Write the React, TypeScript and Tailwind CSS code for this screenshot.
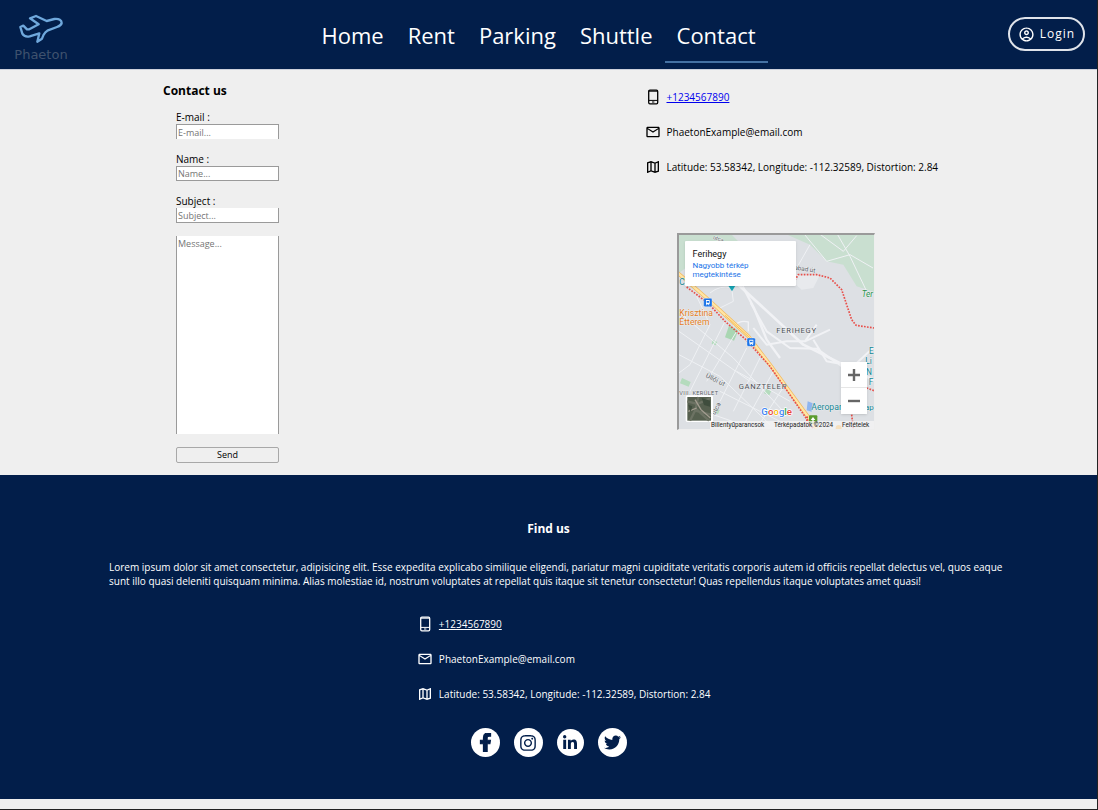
import React from "react";
import { MdOutlineAccountCircle, MdOutlineMail, MdOutlineMap } from "react-icons/md";
import { FaFacebookF, FaInstagram, FaLinkedinIn, FaTwitter } from "react-icons/fa";

const links = ["Home", "Rent", "Parking", "Shuttle", "Contact"];

function Logo() {
  return (
    <a href="#home" className="flex w-14 flex-col items-center gap-[3px]">
      <svg viewBox="57 40 138 90" className="h-[30px] w-[46px]" fill="none" stroke="#6fa8dc" strokeWidth="7" strokeLinejoin="round" strokeLinecap="round" aria-hidden="true">
        <path d="M93 53 L111 46 L143 61 L166 55 Q188 53 188 67 Q187 74 174 79 L145 90 Q138 94 134 102 L129 114 L115 123 L121 98 L92 107 Q76 110 70 99 L64 79 L73 75 L84 86 L91 86 L119 71 Z" />
      </svg>
      <span className="font-['DejaVu_Sans'] text-[13px] leading-4 text-[#3f526e]">Phaeton</span>
    </a>
  );
}

function PhoneIcon({ className }: { className: string }) {
  return (
    <svg viewBox="0 0 16 16" className={className} fill="none" stroke="currentColor" aria-hidden="true">
      <rect x="3.7" y="1.2" width="9" height="13.6" rx="1.2" strokeWidth="1.3" />
      <path d="M4 2.2h8.4M4 11.4h8.4" strokeWidth="1" />
      <path d="M7 13h2.4" strokeWidth="1" />
    </svg>
  );
}

function ContactList({ dark = false }: { dark?: boolean }) {
  const icon = "size-4 shrink-0";
  return (
    <ul className="flex flex-col gap-[19px] text-[10px] leading-4">
      <li className="flex items-center gap-[6px]">
        <PhoneIcon className={icon} />
        <a href="tel:+1234567890" className={dark ? "underline" : "text-[#0000ee] underline"}>+1234567890</a>
      </li>
      <li className="flex items-center gap-[6px]">
        <MdOutlineMail className={icon} />
        <span>PhaetonExample@email.com</span>
      </li>
      <li className="flex items-center gap-[6px]">
        <MdOutlineMap className={icon} />
        <span>Latitude: 53.58342, Longitude: -112.32589, Distortion: 2.84</span>
      </li>
    </ul>
  );
}

function Field({ id, label, edges }: { id: string; label: string; edges: string }) {
  return (
    <div className="flex flex-col">
      <label htmlFor={id} className="text-[10px] leading-[14px]">{label} :</label>
      <input
        id={id}
        placeholder={`${label}...`}
        className={`h-[15px] w-full border-[#9a9a9a] bg-white px-px text-[9px] placeholder:text-[#757575] ${edges}`}
      />
    </div>
  );
}

function MapFrame() {
  return (
    <div className="relative h-[197px] w-[198px] overflow-hidden border-t-2 border-r border-b border-l-2 border-t-[#9a9a9a] border-r-[#eeeeee] border-b-[#eeeeee] border-l-[#9a9a9a] font-['Roboto']">
      <svg viewBox="27 31 585 582" className="block size-full" fill="none" role="img" aria-label="Ferihegy">
        <rect x="20" y="25" width="600" height="600" fill="#dde0e4" />
        <path d="M20 25H180L215 60 150 110 60 120 20 150Z" fill="#c9dfd0" />
        <path d="M340 25H620V205L560 185 520 120 470 110 420 60Z" fill="#c9dfd0" />
        <path d="M378 150L450 150 430 190 395 195 378 180Z" fill="#e8eaed" />
        <path d="M178 300L205 318 192 348 165 338Z" fill="#a9d6b2" />
        <path d="M36 460l26 12-6 14-26-10zM290 490l14 8-6 14-16-6zM128 345l14 7-5 10-12-5zM135 550l14 6-5 12-14-5z" fill="#b4dbbd" />
        <g stroke="#eff1f4" strokeWidth="3">
          <path d="M27 262L190 400 340 560M27 320L240 470M27 390L150 455 300 600M80 215L120 300 60 420 20 450M165 290L90 440 60 500M200 320L110 470M230 370L150 530M270 400L190 560M310 440L215 612M345 480L260 612M130 570L250 612M150 500L330 590M200 440L360 530M400 25L470 110 540 90 609 130M445 25L520 80 560 33M500 25L540 95 590 200M150 60L60 90M420 60L380 130" />
          <path d="M120 205Q150 180 185 190L190 230 130 260" />
        </g>
        <g stroke="#f1f2f5" strokeLinejoin="round">
          <path d="M205 180L400 360 612 467" strokeWidth="8" />
          <path d="M218 185L252 250 290 345 330 400" strokeWidth="7" />
          <path d="M242 235L290 320 360 370 440 372 530 435M250 310L290 360 350 350 405 350 480 315M405 350L440 300M430 345L470 410 550 425 612 367" strokeWidth="6" />
          <path d="M190 305Q210 285 235 292L235 320" strokeWidth="4" />
        </g>
        <path d="M20 142L110 220 235 335 300 420 440 612" stroke="#f3b95f" strokeWidth="11" />
        <path d="M20 142L110 220 235 335 300 420 440 612" stroke="#ffe5a5" strokeWidth="7" />
        <path d="M165 272L240 340" stroke="#f6bd55" strokeWidth="3" />
        <path d="M50 187L115 236 165 290 230 347 300 425 370 525 430 612M365 182L385 150 440 150 480 160 515 195 545 285 558 302 612 310M412 575L408 612M590 490L612 498M545 570L550 612" stroke="#e84f4a" strokeWidth="5" strokeDasharray="5 4" />
        <path d="M175 183H196L186 200Z" fill="#16a5b5" />
        <g fill="#1a73e8" stroke="#fff" strokeWidth="1">
          <rect x="101" y="221" width="25" height="25" rx="4" />
          <rect x="231" y="340" width="25" height="25" rx="4" />
        </g>
        <g fill="#fff">
          <path d="M108 226h11v12h-3l3 4h-3l-2-3h-2l-2 3h-3l3-4h-2zM238 345h12v12h-3l3 4h-3l-2-3h-2l-2 3h-3l3-4h-3z" />
        </g>
        <path d="M110 229h7v5h-7zM240 348h8v5h-8z" fill="#1a73e8" />
        <path d="M413 530l15 6-3 25-15-4z" fill="#8fb5ef" />
        <rect x="417" y="572" width="25" height="25" rx="3" fill="#5b9b2f" />
        <path d="M429 577l7 9h-5v8h-4v-8h-5z" fill="#fff" />
        <circle cx="506" cy="610" r="9" fill="#f6a01a" />
        <g stroke="#f2f4f6" strokeWidth="2" paintOrder="stroke">
          <text x="319" y="324" fontSize="23" letterSpacing="2" fill="#4a4e54">FERIHEGY</text>
          <text x="206" y="492" fontSize="23" letterSpacing="2" fill="#4a4e54">GANZTELEP</text>
          <text x="28" y="510" fontSize="17" letterSpacing="1" fill="#55595e">VIII. KERÜLET</text>
          <text x="28" y="273" fontSize="26" fill="#e37c22">Krisztina</text>
          <text x="28" y="300" fontSize="26" fill="#e37c22">Étterem</text>
          <text x="28" y="182" fontSize="25" fill="#128592">Ca</text>
          <text x="424" y="557" fontSize="26" fill="#128592">Aeropark</text>
          <text x="585" y="557" fontSize="24" fill="#128592">ap</text>
          <text x="597" y="387" fontSize="25" fill="#128592">E</text>
          <text x="586" y="418" fontSize="25" fill="#128592">Li</text>
          <text x="588" y="450" fontSize="25" fill="#128592">N</text>
          <text x="596" y="480" fontSize="25" fill="#128592">F</text>
          <text x="575" y="218" fontSize="25" fontStyle="italic" fill="#26914b">Ter</text>
          <text x="106" y="457" fontSize="20" fill="#5b5f65" transform="rotate(27 106 457)">Üllői út</text>
          <text x="352" y="131" fontSize="19" fill="#5b5f65" transform="rotate(9 352 131)">Szabad út</text>
          <text x="135" y="572" fontSize="20" fill="#5b5f65" transform="rotate(-62 135 572)">utca</text>
          <text x="128" y="42" fontSize="17" fill="#5b5f65" transform="rotate(20 128 42)">utca</text>
        </g>
        <text x="274" y="572" fontSize="29" fontWeight="500" stroke="#fff" strokeWidth="4" paintOrder="stroke">
          <tspan fill="#4285f4">G</tspan><tspan fill="#ea4335">o</tspan><tspan fill="#fbbc05">o</tspan><tspan fill="#4285f4">g</tspan><tspan fill="#34a853">l</tspan><tspan fill="#ea4335">e</tspan>
        </text>
        <rect x="120" y="589" width="492" height="24" fill="#f5f5f5" fillOpacity="0.75" />
        <g fontSize="19" fill="#222">
          <text x="123" y="607">Billentyűparancsok</text>
          <text x="312" y="607">Térképadatok ©2024</text>
          <text x="516" y="607">Feltételek</text>
        </g>
        <rect x="47" y="512" width="82" height="80" rx="5" fill="#fff" />
        <rect x="52" y="517" width="71" height="71" fill="#56604f" />
        <path d="M52 530l30 8 40-18M60 588l15-30 48 12M85 517l-8 35 40 36" stroke="#6c7263" strokeWidth="7" />
        <path d="M75 525l18 30 28 25M55 560l25-10" stroke="#a39d90" strokeWidth="4" />
        <path d="M95 520l25 8v18l-18-5zM55 540l12 5-5 18z" fill="#3f4d3d" />
      </svg>
      <div className="absolute top-[6px] left-[6px] h-[45px] w-[111px] rounded-[1px] bg-white px-2 pt-2 shadow-sm">
        <p className="text-[9px] leading-[10px] text-[#111111]">Ferihegy</p>
        <a href="#map" className="mt-[2px] block w-16 text-[8px] leading-[9px] text-[#1a73e8]">Nagyobb térkép megtekintése</a>
      </div>
      <div className="absolute right-[7px] bottom-[15px] flex w-[26px] flex-col bg-white shadow-sm">
        <button type="button" aria-label="Zoom in" className="flex h-[26px] items-center justify-center border-b border-[#e6e6e6]">
          <svg viewBox="0 0 12 12" className="size-3" stroke="#666666" strokeWidth="2.4"><path d="M0 6h12M6 0v12" /></svg>
        </button>
        <button type="button" aria-label="Zoom out" className="flex h-[26px] items-center justify-center">
          <svg viewBox="0 0 12 12" className="size-3" stroke="#666666" strokeWidth="2.4"><path d="M0 6h12" /></svg>
        </button>
      </div>
    </div>
  );
}

const socials = [
  { name: "Facebook", Icon: FaFacebookF, disc: "size-[29px]", glyph: "size-[19px] stroke-current stroke-[30px]" },
  { name: "Instagram", Icon: FaInstagram, disc: "size-[29px]", glyph: "size-[18px]" },
  { name: "LinkedIn", Icon: FaLinkedinIn, disc: "size-[27px]", glyph: "size-4" },
  { name: "Twitter", Icon: FaTwitter, disc: "size-[29px]", glyph: "size-[17px]" },
];

export default function App() {
  return (
    <div className="border-r border-b border-[#222222] bg-[#efefef] pb-[10px] font-['Open_Sans',sans-serif] text-black">
      <header className="flex h-[70px] items-start justify-between border-b border-[#cdd1dc] bg-[#021e4a] pr-3 pl-[13px]">
        <div className="pt-[14px]"><Logo /></div>
        <nav className="flex pt-2 text-[22px] leading-[55px] text-white">
          {links.map((l) => (
            <a
              key={l}
              href={`#${l.toLowerCase()}`}
              className={l === "Contact" ? "h-[55px] border-b-2 border-[#4571a3] px-3" : "h-[55px] px-3"}
            >
              {l}
            </a>
          ))}
        </nav>
        <div className="pt-[17px]">
          <button type="button" className="flex h-[34px] w-[77px] items-center justify-center gap-[5px] rounded-full border-2 border-[#dfe3ea] text-[12px] tracking-[1px] text-white">
            <MdOutlineAccountCircle className="size-[17px]" />
            Login
          </button>
        </div>
      </header>

      <main className="grid grid-cols-2">
        <section className="pt-3 pb-3 pl-[163px]">
          <h1 className="text-[12px] leading-[18px] font-bold">Contact us</h1>
          <form className="mt-[10px] ml-[13px] flex w-[103px] flex-col gap-[13px]">
            <Field id="email" label="E-mail" edges="border border-b-0" />
            <Field id="name" label="Name" edges="border" />
            <Field id="subject" label="Subject" edges="border border-t-0" />
            <textarea
              aria-label="Message"
              placeholder="Message..."
              className="block h-[198px] w-full resize-none border-x border-[#9a9a9a] bg-white px-px pt-[2px] text-[9px] leading-3 placeholder:text-[#757575]"
            />
            <button type="button" className="h-4 rounded-[2px] border border-[#a8a8a8] bg-[#efefef] text-[9px] leading-3">Send</button>
          </form>
        </section>
        <section className="pt-[19px] pl-24">
          <ContactList />
          <div className="mt-[58px] ml-8"><MapFrame /></div>
        </section>
      </main>

      <footer className="bg-[#021e4a] pt-[45px] pb-[42px] text-white">
        <h2 className="text-center text-[12px] leading-[18px] font-bold">Find us</h2>
        <p className="mr-[90px] ml-[109px] mt-[22px] text-[10px] leading-[14px]">
          Lorem ipsum dolor sit amet consectetur, adipisicing elit. Esse expedita explicabo similique eligendi, pariatur magni cupiditate veritatis corporis autem id officiis repellat delectus vel, quos eaque sunt illo quasi deleniti quisquam minima. Alias molestiae id, nostrum voluptates at repellat quis itaque sit tenetur consectetur! Quas repellendus itaque voluptates amet quasi!
        </p>
        <div className="mt-7 pl-[38%]"><ContactList dark /></div>
        <div className="mt-[26px] flex items-center justify-center gap-[14px]">
          {socials.map(({ name, Icon, disc, glyph }) => (
            <a key={name} href={`#${name.toLowerCase()}`} aria-label={name} className={`flex items-center justify-center rounded-full bg-white text-[#021e4a] ${disc}`}>
              <Icon className={glyph} />
            </a>
          ))}
        </div>
      </footer>
    </div>
  );
}
